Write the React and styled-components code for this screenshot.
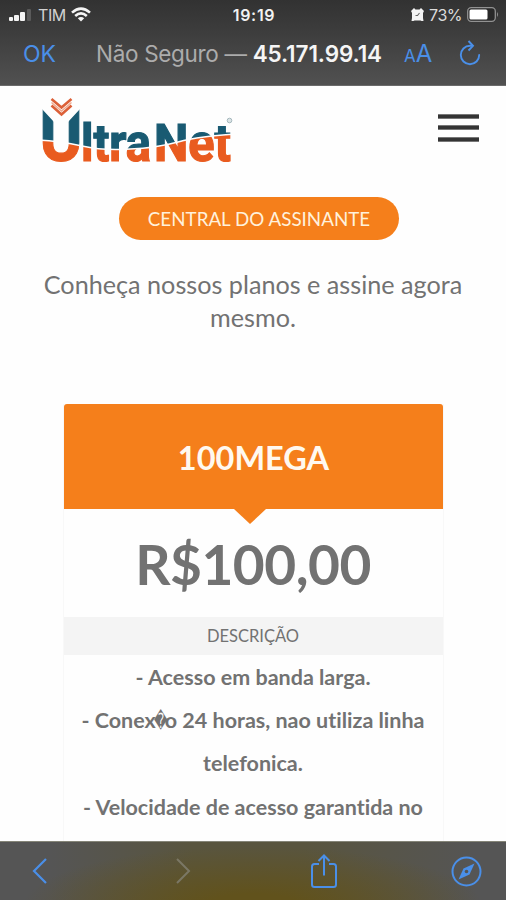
import styled, { createGlobalStyle } from 'styled-components';

const GlobalStyle = createGlobalStyle`
  * {
    box-sizing: border-box;
  }
  body {
    margin: 0;
    background: #fff;
    font-family: Lato, sans-serif;
    font-variant-ligatures: none;
  }
  svg {
    display: block;
    flex: none;
  }
`;

const Phone = styled.div`
  display: flex;
  flex-direction: column;
  width: 506px;
  height: 900px;
  overflow: hidden;
  background: #fefefe;
`;

const BrowserTop = styled.header`
  height: 86px;
  flex: none;
  color: #f2f2f2;
  font-family: Inter, sans-serif;
  background: linear-gradient(#323232, #3c3c3c 35%, #515151);
  border-bottom: 1px solid #6b6b6b;
`;

const StatusBar = styled.div`
  display: grid;
  grid-template-columns: 1fr auto 1fr;
  align-items: center;
  height: 29px;
  padding: 0 7px 0 9px;
  font-size: 16px;
`;

const StatusGroup = styled.div`
  display: flex;
  align-items: center;
  justify-content: ${({ $end }) => ($end ? 'flex-end' : 'flex-start')};
  gap: 5px;
`;

const Carrier = styled.span`
  color: #d2d2d2;
  letter-spacing: -0.4px;
`;

const Percent = styled.span`
  color: #dcdcdc;
  letter-spacing: -0.5px;
`;

const Clock = styled.span`
  font-weight: 600;
  letter-spacing: 0.7px;
`;

const AddressBar = styled.div`
  display: flex;
  align-items: center;
  height: 49px;
  padding: 0 24px 0 23px;
  color: #4a8fe8;
`;

const Done = styled.span`
  width: 73px;
  font-size: 23px;
`;

const Address = styled.span`
  width: 308px;
  font-size: 22.5px;
  letter-spacing: -0.32px;
  white-space: nowrap;
  color: #acacac;

  b {
    font-weight: 600;
    letter-spacing: -0.1px;
    color: #f5f5f5;
  }
`;

const TextSize = styled.span`
  width: 55px;
  font-size: 24px;

  small {
    font-size: 17px;
  }
`;

const Page = styled.main`
  display: flex;
  flex-direction: column;
  align-items: center;
  flex: 1;
  min-height: 0;
  overflow: hidden;
  color: #727272;
`;

const SiteHeader = styled.div`
  display: flex;
  justify-content: space-between;
  align-self: stretch;
  flex: none;
  height: 111px;
  padding: 6px 27px 0 38px;
`;

const Burger = styled.div`
  display: flex;
  flex-direction: column;
  gap: 6.5px;
  padding-top: 21.5px;

  span {
    width: 41px;
    height: 5px;
    background: #343434;
    border: 1px solid #777;
    border-width: 1px 0;
  }
`;

const Subscriber = styled.a`
  display: flex;
  align-items: center;
  justify-content: center;
  flex: none;
  width: 280px;
  height: 43px;
  margin-left: 12px;
  border-radius: 22px;
  background: #f57f1b;
  color: #fff1dc;
  font-size: 18.8px;
`;

const Intro = styled.p`
  flex: none;
  width: 440px;
  height: 136px;
  margin: 28px 0 0;
  font-size: 25.2px;
  line-height: 32.5px;
  text-align: center;
`;

const Plan = styled.section`
  flex: none;
  width: 381px;
  min-height: 450px;
  border: 1px solid #f8f8f8;
  border-top: 0;
  text-align: center;
`;

const PlanName = styled.h2`
  position: relative;
  display: flex;
  align-items: center;
  justify-content: center;
  height: 105px;
  margin: 0;
  padding: 1px 0 0 1px;
  border-radius: 3px 3px 0 0;
  background: #f57f1b;
  color: #fff9f0;
  font-size: 32.5px;

  &::after {
    content: '';
    position: absolute;
    top: 100%;
    left: 170px;
    border: 16px solid transparent;
    border-top: 15px solid #f57f1b;
    border-bottom: 0;
  }
`;

const Price = styled.div`
  height: 108px;
  padding-top: 20px;
  font-size: 55px;
  letter-spacing: -0.5px;
  line-height: 70px;
  font-weight: 700;
`;

const Caption = styled.div`
  height: 38px;
  background: #f4f4f4;
  font-size: 16.5px;
  line-height: 38px;
`;

const Details = styled.div`
  padding-top: 1px;
  font-size: 21.5px;
  line-height: 43.2px;
  font-weight: 700;

  p {
    margin: 0;
    white-space: nowrap;
  }
`;

// the fallback glyph is wider than the slot it gets, so it runs into the next letter
const Unknown = styled.span`
  display: inline-block;
  width: 11px;
  margin-left: -2px;
  font-family: 'DejaVu Sans', sans-serif;
  font-size: 21px;
  font-weight: 400;
  line-height: 20px;
  transform: scaleX(0.62);
  transform-origin: 0 50%;
`;

const Toolbar = styled.footer`
  display: grid;
  grid-template-columns: 136px 137px 147px auto;
  align-items: center;
  flex: none;
  height: 59px;
  padding: 0 24px 0 31px;
  color: #4a8fe8;
  border-top: 1px solid #858578;
  background:
    radial-gradient(ellipse 230px 60px at 50% 110%, #61521c 20%, rgba(96, 82, 31, 0) 100%),
    linear-gradient(90deg, #555 10%, #59553f 38%, #59553f 60%, #555 94%);
`;

const Signal = () => (
  <svg width="24" height="14" fill="#f4f4f4">
    <rect x="0" y="9" width="4" height="4" rx="1" />
    <rect x="5" y="7" width="5" height="6" rx="1" />
    <rect x="11" y="4" width="5" height="9" rx="1" />
    <rect x="18" y="1" width="4" height="12" rx="1" fill="#5a5a5a" />
  </svg>
);

const Wifi = () => (
  <svg width="20" height="15" viewBox="0 0 20 15" fill="none" stroke="#f4f4f4" strokeWidth="2.6">
    <path d="M1 5.6Q10-2.4 19 5.6" />
    <path d="M4.2 9Q10 3.8 15.8 9" />
    <path d="M10 14.5L6.8 11.2Q10 8.6 13.2 11.2Z" fill="#f4f4f4" stroke="none" />
  </svg>
);

const Alarm = () => (
  <svg width="13" height="14" viewBox="0 0 13 14">
    <path d="M0 3L3 0L4.500 1.500H8.500L10 0L13 3L12 5V10L12.500 13H10.500L9.500 12.500H3.500L2.500 13H.5L1 10V5Z" fill="#f4f4f4" />
    <path d="M8.500 5L6.500 7.500H4.500" fill="none" stroke="#666" strokeWidth="1.1" />
  </svg>
);

const Battery = () => (
  <svg width="32" height="15" viewBox="0 0 32 15">
    <rect x=".7" y=".7" width="27.600" height="13.600" rx="3.500" fill="#292929" stroke="#929292" strokeWidth="1.3" />
    <rect x="2.500" y="2.500" width="18" height="10" rx="1.500" fill="#fff" />
    <path d="M30 5q2 2.500 0 5z" fill="#929292" />
  </svg>
);

const Reload = () => (
  <svg width="23" height="27" viewBox="0 0 23 27" fill="none" stroke="currentColor" strokeWidth="1.9">
    <path d="M12.500 5.800H11A9.200 9.200 0 1 0 20.200 15" strokeLinecap="round" />
    <path d="M9.500 1L14 5.800L9.500 10.500" />
  </svg>
);

const WAVE = 'M0 48Q22 49 44 54T92 57Q118 56 140 50T200 42';

const Logo = () => (
  <svg width="200" height="76" viewBox="0 0 200 76" fontFamily="Roboto, sans-serif" fontWeight="700">
    <defs>
      <pattern id="twoTone" width="200" height="76" patternUnits="userSpaceOnUse">
        <rect width="200" height="76" fill="#195a72" />
        <path d={`${WAVE}V76H0Z`} fill="#e95b1f" />
      </pattern>
    </defs>
    <g fill="url(#twoTone)" stroke="url(#twoTone)" strokeWidth="1.2">
      <text x="1.500" y="69" fontSize="73" textLength="43" lengthAdjust="spacingAndGlyphs">U</text>
      <text x="43" y="69" fontSize="51" textLength="70" lengthAdjust="spacingAndGlyphs">ltra</text>
      <text x="116" y="69" fontSize="51" textLength="77" lengthAdjust="spacingAndGlyphs">Net</text>
    </g>
    {/* slanted tips of the U */}
    <path d="M0 10H44V17H42L30 30H16L4 17H0Z" fill="#fefefe" />
    <path d={WAVE} fill="none" stroke="#fefefe" strokeWidth="1.600" />
    <path d="M13.500 7L23.500 15.500L33.500 7M13.500 13.500L23.500 22.500L33.500 13.500" fill="none" stroke="#dc6038" strokeWidth="2.600" />
    <path d="M13.500 10.500L23.500 19L33.500 10.500" fill="none" stroke="#efa98e" strokeWidth="1.500" />
    <circle cx="191.500" cy="28.500" r="2.300" fill="#dce4e6" stroke="#a5b8bd" />
  </svg>
);

const Back = () => (
  <svg width="17" height="26" viewBox="0 0 17 26" fill="none" stroke="currentColor" strokeWidth="2.200">
    <path d="M15 1L3 13L15 25" />
  </svg>
);

const Forward = () => (
  <svg width="27" height="26" viewBox="-8 0 27 26" fill="none" stroke="#7b7765" strokeWidth="2">
    <path d="M2 1L14 13L2 25" />
  </svg>
);

const Share = () => (
  <svg width="40" height="36" viewBox="-6 0 40 36" fill="none" stroke="currentColor" strokeWidth="2">
    <path d="M9 11H4.500Q2 11 2 13.500V31.500Q2 34 4.500 34H23.500Q26 34 26 31.500V13.500Q26 11 23.500 11H19" />
    <path d="M14 22.500V3M8.500 8L14 2.500L19.500 8" />
  </svg>
);

const Compass = () => (
  <svg width="31" height="31" viewBox="0 0 31 31" fill="none" stroke="currentColor" strokeWidth="2">
    <circle cx="15.500" cy="15.500" r="14" />
    <path d="M23.500 7.500L18.500 18.500L7.500 23.500L12.500 12.500Z" fill="currentColor" stroke="none" />
    <circle cx="15.500" cy="15.500" r="1.800" fill="#555" stroke="none" />
  </svg>
);

const App = () => {
  return (
    <>
      <GlobalStyle />
      <Phone>
        <BrowserTop>
          <StatusBar>
            <StatusGroup>
              <Signal />
              <Carrier>TIM</Carrier>
              <Wifi />
            </StatusGroup>
            <Clock>19:19</Clock>
            <StatusGroup $end>
              <Alarm />
              <Percent>73%</Percent>
              <Battery />
            </StatusGroup>
          </StatusBar>
          <AddressBar>
            <Done>OK</Done>
            <Address>
              Não Seguro — <b>45.171.99.14</b>
            </Address>
            <TextSize>
              <small>A</small>A
            </TextSize>
            <Reload />
          </AddressBar>
        </BrowserTop>
        <Page>
          <SiteHeader>
            <Logo />
            <Burger>
              <span />
              <span />
              <span />
            </Burger>
          </SiteHeader>
          <Subscriber>CENTRAL DO ASSINANTE</Subscriber>
          <Intro>Conheça nossos planos e assine agora mesmo.</Intro>
          <Plan>
            <PlanName>100MEGA</PlanName>
            <Price>R$100,00</Price>
            <Caption>DESCRIÇÃO</Caption>
            <Details>
              <p>- Acesso em banda larga.</p>
              <p>
                - Conex<Unknown>{'\uFFFD'}</Unknown>o 24 horas, nao utiliza linha
                <br />
                telefonica.
              </p>
              <p>- Velocidade de acesso garantida no</p>
            </Details>
          </Plan>
        </Page>
        <Toolbar>
          <Back />
          <Forward />
          <Share />
          <Compass />
        </Toolbar>
      </Phone>
    </>
  );
};

export default App;
